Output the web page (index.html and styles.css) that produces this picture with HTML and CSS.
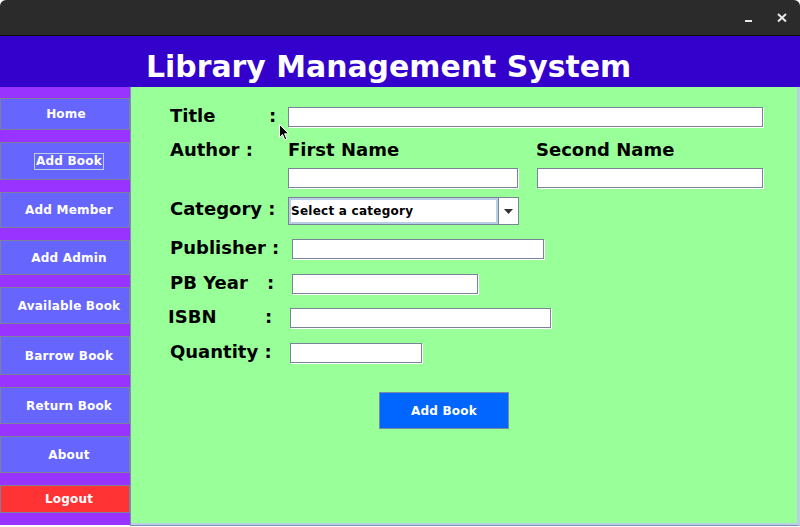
FILE: index.html
```html
<!DOCTYPE html>
<html>
<head>
<meta charset="utf-8">
<title>Library Management System</title>
<link rel="stylesheet" href="styles.css">
</head>
<body>
<div class="window">
  <div class="titlebar">
    <svg class="controls" width="60" height="35" viewBox="0 0 60 35">
      <line x1="5" y1="21" x2="12" y2="21" stroke="#e8e8e8" stroke-width="2"/>
      <path d="M38 14 L46 21.5 M46 14 L38 21.5" stroke="#e8e8e8" stroke-width="2" fill="none"/>
    </svg>
  </div>
  <header class="header">Library Management System</header>
  <div class="main">
    <nav class="sidebar">
      <button class="nav-btn nav-home">Home</button>
      <button class="nav-btn nav-add"><span class="focus">Add Book</span></button>
      <button class="nav-btn nav-member">Add Member</button>
      <button class="nav-btn nav-admin">Add Admin</button>
      <button class="nav-btn nav-avail">Available Book</button>
      <button class="nav-btn nav-barrow">Barrow Book</button>
      <button class="nav-btn nav-return">Return Book</button>
      <button class="nav-btn nav-about">About</button>
      <button class="nav-btn nav-logout">Logout</button>
    </nav>
    <section class="panel">
      <div class="form">
        <div class="row row-title">
          <label class="label"><span class="name name-title">Title</span>:</label>
          <input class="field w-title" type="text">
        </div>
        <div class="row row-author">
          <span class="label">Author :</span>
          <span class="sublabel sub-first">First Name</span>
          <span class="sublabel">Second Name</span>
        </div>
        <div class="row row-names">
          <span class="spacer"></span>
          <input class="field w-first" type="text">
          <input class="field w-second" type="text">
        </div>
        <div class="row row-cat">
          <span class="label label-cat">Category :</span>
          <div class="combo">
            <div class="combo-text">Select a category</div>
            <div class="combo-arrow">
              <svg width="9" height="5" viewBox="0 0 9 5"><path d="M0 0 H9 L4.5 5 Z" fill="#333"/></svg>
            </div>
          </div>
        </div>
        <div class="row row-pub">
          <span class="label">Publisher :</span>
          <input class="field w-pub" type="text">
        </div>
        <div class="row row-year">
          <span class="label"><span class="name">PB Year</span>:</span>
          <input class="field w-year" type="text">
        </div>
        <div class="row row-isbn">
          <span class="label label-isbn"><span class="name">ISBN</span>:</span>
          <input class="field w-isbn" type="text">
        </div>
        <div class="row row-qty">
          <span class="label">Quantity :</span>
          <input class="field w-qty" type="text">
        </div>
      </div>
      <button class="submit">Add Book</button>
    </section>
  </div>
  <svg class="cursor" width="12" height="18" viewBox="0 0 12 18">
    <path d="M0.5 0.5 L0.5 13.5 L3.5 10.5 L5.8 15.8 L7.8 15 L5.6 9.8 L9.8 9.8 Z" fill="#000" stroke="#fff" stroke-width="1"/>
  </svg>
</div>
</body>
</html>
```

FILE: styles.css
```css
* {
  box-sizing: border-box;
  margin: 0;
  padding: 0;
}

html, body {
  width: 800px;
  height: 527px;
  overflow: hidden;
  background: #ffffff;
  font-family: "DejaVu Sans", "Liberation Sans", sans-serif;
}

.window {
  position: relative;
  width: 800px;
  height: 527px;
  display: flex;
  flex-direction: column;
}

.titlebar {
  height: 36px;
  flex: none;
  background: #2b2b2b;
  border-bottom: 1px solid #0e0e0e;
  border-radius: 6px 6px 0 0;
  display: flex;
  justify-content: flex-end;
  align-items: flex-start;
}

.controls {
  display: block;
}

.header {
  height: 51px;
  flex: none;
  background: #3300cc;
  color: #ffffff;
  font-weight: bold;
  font-size: 29.9px;
  line-height: 36px;
  padding: 13px 0 0 146px;
  white-space: nowrap;
}

.main {
  display: flex;
  align-items: flex-start;
  height: 439px;
  flex: none;
}

.sidebar {
  width: 130px;
  height: 438px;
  flex: none;
  background: #9933ff;
  padding-top: 11px;
  display: flex;
  flex-direction: column;
  gap: 12px;
}

.nav-btn {
  width: 130px;
  border: 1px solid #7f7f9c;
  background: #6666ff;
  color: #ffffff;
  font-family: "DejaVu Sans", sans-serif;
  font-weight: bold;
  font-size: 12px;
  letter-spacing: 0.2px;
  display: flex;
  align-items: center;
  justify-content: center;
  padding-left: 8px;
}

.nav-home { height: 32px; padding-left: 2px; }
.nav-add { height: 38px; }
.nav-member { height: 36px; }
.nav-admin { height: 35px; }
.nav-avail { height: 37px; }
.nav-barrow { height: 39px; }
.nav-return { height: 37px; }
.nav-about { height: 37px; }
.nav-logout { height: 28px; background: #ff3333; }

.focus {
  border: 1px solid #b8cfe5;
  line-height: 15px;
  padding: 0 1px;
}

.panel {
  flex: 1;
  height: 439px;
  background: #99ff99;
  border-left: 1px solid #7f8fb2;
  border-bottom: 1px solid #7f8fb2;
  border-right: 3px solid #b8cfe5;
  box-shadow: inset 0 -2px 0 #b8cfe5;
  padding: 20px 0 0 39px;
}

.form {
  display: flex;
  flex-direction: column;
}

.row {
  display: flex;
  align-items: center;
  height: 20px;
}

.row-author { margin-top: 14px; }
.row-names { margin-top: 7px; }
.row-cat { margin-top: 9px; height: 28px; }
.row-pub { margin-top: 14px; }
.row-year { margin-top: 15px; }
.row-isbn { margin-top: 14px; }
.row-qty { margin-top: 15px; }

.label {
  flex: none;
  width: 118px;
  font-weight: bold;
  font-size: 18px;
  line-height: 20px;
  color: #000000;
  white-space: pre;
  margin-bottom: 2px;
}

.label-cat {
  margin-bottom: 4px;
}

.label-isbn {
  width: 120px;
  margin-left: -2px;
}

.name {
  display: inline-block;
  width: 97px;
}

.name-title {
  width: 99px;
}

.sublabel {
  font-weight: bold;
  font-size: 18px;
  line-height: 20px;
  color: #000000;
  white-space: pre;
  margin-bottom: 2px;
}

.sub-first {
  width: 248px;
}

.spacer {
  width: 118px;
  flex: none;
}

.field {
  flex: none;
  height: 20px;
  background: #ffffff;
  border: 1px solid #7a8499;
  box-shadow: 1px 1px 0 #ffffff;
  outline: none;
}

.w-title { width: 475px; }
.w-first { width: 230px; }
.w-second { width: 226px; margin-left: 19px; }
.w-pub { width: 252px; margin-left: 4px; }
.w-year { width: 186px; margin-left: 4px; }
.w-isbn { width: 261px; margin-left: 2px; }
.w-qty { width: 132px; margin-left: 2px; }

.combo {
  flex: none;
  width: 231px;
  height: 28px;
  border: 1px solid #7a8499;
  background: #ffffff;
  display: flex;
}

.combo-text {
  flex: 1;
  border: 2px solid #b8cfe5;
  font-weight: bold;
  font-size: 12px;
  letter-spacing: 0.25px;
  color: #000000;
  display: flex;
  align-items: center;
  padding-left: 0;
  white-space: nowrap;
}

.combo-arrow {
  width: 20px;
  flex: none;
  border-left: 1px solid #7a8499;
  display: flex;
  align-items: center;
  justify-content: center;
}

.combo-arrow svg {
  display: block;
}

.submit {
  display: flex;
  align-items: center;
  justify-content: center;
  width: 130px;
  height: 37px;
  margin: 29px 0 0 209px;
  background: #0066ff;
  border: 1px solid #7a8aa0;
  color: #ffffff;
  font-family: "DejaVu Sans", sans-serif;
  font-weight: bold;
  font-size: 12px;
  letter-spacing: 0.2px;
}

.cursor {
  position: absolute;
  left: 279px;
  top: 124px;
}
```
